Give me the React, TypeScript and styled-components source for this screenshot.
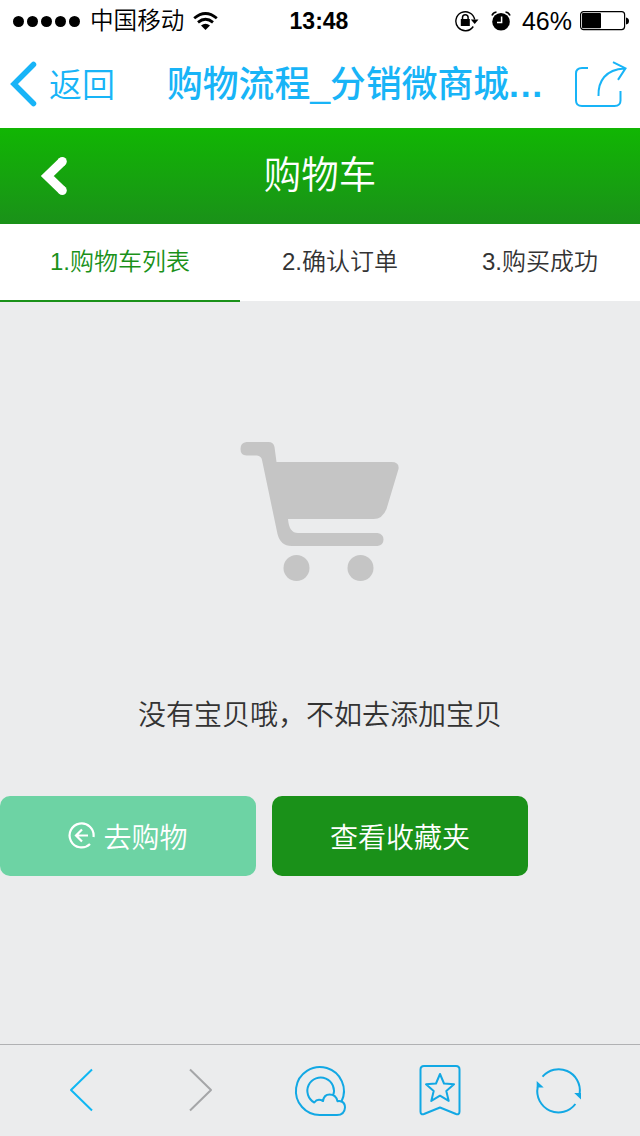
import React from 'react';
import styled, { createGlobalStyle } from 'styled-components';

const GlobalStyle = createGlobalStyle`
  * { box-sizing: border-box; }
  body {
    margin: 0;
    background: #ebeced;
    font-family: "Liberation Sans", "Noto Sans CJK SC", sans-serif;
  }
  svg { display: block; flex: none; }
`;

const BLUE = '#18b4f7';
const TOOL_BLUE = '#12a8e4';
const GREEN = '#1a9119';

const Screen = styled.div`
  display: flex;
  flex-direction: column;
  width: 640px;
  height: 1136px;
  overflow: hidden;
  background: #ebeced;
`;

const StatusBar = styled.header`
  display: grid;
  grid-template-columns: 1fr auto 1fr;
  align-items: center;
  height: 40px;
  padding: 0 11px 0 13px;
  background: #fff;
  color: #000;
`;

const StatusGroup = styled.div<{ $end?: boolean }>`
  display: flex;
  align-items: center;
  justify-content: ${(p) => (p.$end ? 'flex-end' : 'flex-start')};
`;

const SignalDots = styled.div`
  display: flex;
  gap: 3px;
  margin-right: 10px;
`;

const Dot = styled.i`
  width: 11px;
  height: 11px;
  border-radius: 50%;
  background: #000;
`;

const Carrier = styled.span`
  height: 40px;
  margin-right: 9px;
  font-size: 23.6px;
  font-weight: 350;
  line-height: 41px;
`;

const Clock = styled.time`
  margin-right: 4px;
  font-size: 23px;
  font-weight: 700;
  line-height: 42px;
`;

const StatusIcons = styled.div`
  display: flex;
  align-items: center;
  gap: 12px;
`;

const Percent = styled.span`
  margin: 0 8px 0 11px;
  font-size: 25px;
  line-height: 40px;
`;

const NavBar = styled.nav`
  display: flex;
  align-items: center;
  height: 88px;
  padding: 0 12px 0 10px;
  background: #fff;
  color: ${BLUE};
`;

const BackLabel = styled.span`
  width: 118px;
  height: 88px;
  margin-left: 11px;
  font-size: 33px;
  font-weight: 350;
  line-height: 92px;
`;

const NavTitle = styled.h1`
  flex: 1;
  height: 88px;
  margin: 0;
  font-size: 35.8px;
  font-weight: 500;
  line-height: 90px;
  white-space: nowrap;
`;

const Ellipsis = styled.span`
  font-weight: 700;
  letter-spacing: 1.6px;
`;

const PageHeader = styled.div`
  display: grid;
  grid-template-columns: 80px 1fr 80px;
  align-items: center;
  height: 96px;
  background: linear-gradient(#11b603, #1a9119);
  color: #fff;
`;

const BackButton = styled.a`
  padding-left: 39.5px;
`;

const PageTitle = styled.h2`
  height: 96px;
  margin: 0;
  font-size: 37.5px;
  font-weight: 350;
  line-height: 94px;
  text-align: center;
`;

const Steps = styled.ol`
  display: grid;
  grid-template-columns: 240px 200px 200px;
  height: 78px;
  margin: 0;
  padding: 0;
  list-style: none;
  background: linear-gradient(#fff 77px, #ebeced 77px);
`;

const Step = styled.li<{ $active?: boolean }>`
  border-bottom: 2px solid ${(p) => (p.$active ? GREEN : 'transparent')};
  color: ${(p) => (p.$active ? GREEN : '#333')};
  font-size: 24px;
  font-weight: 350;
  line-height: 76px;
  text-align: center;
`;

const EmptyCart = styled.main`
  display: flex;
  flex: 1;
  flex-direction: column;
  align-items: center;
  padding-top: 138px;
`;

const Message = styled.p`
  margin: 111px 0 57px;
  color: #333;
  font-size: 28px;
  font-weight: 350;
  line-height: 46px;
`;

const Actions = styled.div`
  display: flex;
  gap: 16px;
  width: 100%;
`;

const ActionButton = styled.button<{ $bg: string }>`
  display: flex;
  align-items: center;
  justify-content: center;
  gap: 8px;
  width: 256px;
  height: 80px;
  padding: 0 0 1px;
  border: 0;
  border-radius: 10px;
  background: ${(p) => p.$bg};
  color: #fff;
  font-family: inherit;
  font-size: 28px;
  font-weight: 350;
`;

const Toolbar = styled.footer`
  display: grid;
  grid-template-columns: repeat(5, 119.5px);
  justify-content: center;
  align-items: center;
  justify-items: center;
  height: 92px;
  padding: 0 0 1px;
  border-top: 1px solid #b0b1b3;
`;

const WifiIcon = () => (
  <svg width="25" height="19" viewBox="0 0 25 19" fill="none" stroke="#000" strokeWidth="2.8">
    <path d="M1.2 6.3Q12.5-3.3 23.8 6.3M5 10.4q7.500-6.200 15 0" />
    <path d="M8 13.600q4.500-3.700 9 0L12.500 18z" fill="#000" stroke="none" />
  </svg>
);

const LockIcon = () => (
  <svg width="24" height="22" viewBox="0 0 24 22" fill="none" stroke="#000">
    <path d="M18.300 16.500A9.500 9.500 0 1 1 19.700 9.500" strokeWidth="1.400" />
    <path d="M15.800 9.500h7.700l-3.800 4.500z" fill="#000" stroke="none" />
    <rect x="5.800" y="9" width="9" height="7" fill="#000" stroke="none" />
    <path d="M7.500 10V7.500a2.800 2.800 0 0 1 5.600 0V10" strokeWidth="1.500" />
  </svg>
);

const AlarmIcon = () => (
  <svg width="20" height="20" viewBox="0 0 20 20" fill="none">
    <circle cx="10" cy="10.800" r="8.800" fill="#000" />
    <path d="M1 4.600Q2 1.500 5.500 1M19 4.600Q18 1.500 14.500 1" stroke="#000" strokeWidth="1.700" />
    <path d="M10.600 5.500v6H6" stroke="#fff" strokeWidth="1.500" />
  </svg>
);

const BatteryIcon = () => (
  <svg width="49" height="20" viewBox="0 0 49 20">
    <rect x=".6" y=".6" width="44" height="18" rx="3" fill="none" stroke="#000" strokeWidth="1.200" />
    <rect x="2" y="2" width="19" height="15.300" rx="1" />
    <path d="M46 6.500q3 .5 3 3.500t-3 3.500z" />
  </svg>
);

const NavBackIcon = () => (
  <svg width="28" height="46" viewBox="0 0 28 46" fill="none" stroke={BLUE} strokeWidth="5.500" strokeLinecap="round">
    <path d="M23.500 3.500L4 23l19.500 19.500" />
  </svg>
);

const ShareIcon = () => (
  <svg width="54" height="48" viewBox="0 0 54 48" fill="none" stroke={BLUE} strokeWidth="2">
    <path d="M14 8H8Q2 8 2 13.500v27Q2 46 8 46H40.500q6 0 6-5.500V31" />
    <path d="M24.500 36C24 21 31.500 9.500 50.500 8.500M39 2.200l12.500 6.200-7.500 11.500" />
  </svg>
);

const HeaderBackIcon = () => (
  <svg width="28" height="40" viewBox="0 0 28 40" fill="none" stroke="#fff" strokeWidth="9">
    <path d="M22.300 5.500L7.300 20l15 14.500" />
    <circle cx="22.300" cy="5.500" r="4.500" fill="#fff" stroke="none" />
    <circle cx="22.300" cy="34.500" r="4.500" fill="#fff" stroke="none" />
  </svg>
);

const CartIcon = () => (
  <svg width="160" height="142" viewBox="0.5 0 160 142" fill="#c5c5c5">
    <path d="M7 2h22q5 0 6 5l2 15h115q8 0 7 7l-12 40q-4 10-13 10H48.500q1 14 10 14H138q6 1 6 6.500t-6 6.500H52q-11 0-14-12L22.500 20q-.7-4-5-4.500H7Q1 15.500 1 9t6-7z" />
    <circle cx="57" cy="128" r="13" />
    <circle cx="121" cy="128" r="13" />
  </svg>
);

const ReturnIcon = () => (
  <svg width="27" height="27" viewBox="0 0 27 27" fill="none" stroke="#fff" strokeWidth="2.200">
    <path d="M25.500 15A12 12 0 1 0 22 22" />
    <path d="M20 13.500H8M14 7.500l-6 6 6 6" />
  </svg>
);

const ToolIcon = ({ children, color = TOOL_BLUE }: { children: React.ReactNode; color?: string }) => (
  <svg width="56" height="56" viewBox="0 0 56 56" fill="none" stroke={color} strokeWidth="2" strokeLinejoin="round">
    {children}
  </svg>
);

export default function App() {
  return (
    <>
      <GlobalStyle />
      <Screen>
        <StatusBar>
          <StatusGroup>
            <SignalDots>
              {[0, 1, 2, 3, 4].map((n) => (
                <Dot key={n} />
              ))}
            </SignalDots>
            <Carrier>中国移动</Carrier>
            <WifiIcon />
          </StatusGroup>
          <Clock>13:48</Clock>
          <StatusGroup $end>
            <StatusIcons>
              <LockIcon />
              <AlarmIcon />
            </StatusIcons>
            <Percent>46%</Percent>
            <BatteryIcon />
          </StatusGroup>
        </StatusBar>

        <NavBar>
          <NavBackIcon />
          <BackLabel>返回</BackLabel>
          <NavTitle>
            购物流程_分销微商城<Ellipsis>...</Ellipsis>
          </NavTitle>
          <ShareIcon />
        </NavBar>

        <PageHeader>
          <BackButton>
            <HeaderBackIcon />
          </BackButton>
          <PageTitle>购物车</PageTitle>
        </PageHeader>

        <Steps>
          <Step $active>1.购物车列表</Step>
          <Step>2.确认订单</Step>
          <Step>3.购买成功</Step>
        </Steps>

        <EmptyCart>
          <CartIcon />
          <Message>没有宝贝哦，不如去添加宝贝</Message>
          <Actions>
            <ActionButton $bg="#6dd3a4">
              <ReturnIcon />
              去购物
            </ActionButton>
            <ActionButton $bg={GREEN}>查看收藏夹</ActionButton>
          </Actions>
        </EmptyCart>

        <Toolbar>
          <ToolIcon color="#10b7f3">
            <path d="M39 7.500L18 28 39 48.500" />
          </ToolIcon>
          <ToolIcon color="#a5a6a8">
            <path d="M17 7.500L38 28 17 48.500" />
          </ToolIcon>
          <ToolIcon>
            <path d="M28.500 53A24 24 0 1 1 49.500 39.500Q53 41 53 45.500 52.500 53 45 53z" />
            <path d="M49.500 39.500Q47.500 38.500 45.500 39.200 44 32.500 37.500 32.500 32 32.500 31 39 25.500 36 22.300 40.500A13.300 13.300 0 1 1 41.100 33.500" />
          </ToolIcon>
          <ToolIcon>
            <path d="M12 4h32q3.500 0 3.500 3.500v42q0 3.500-3.500 2.500L28 45.500 12 52q-3.500 1-3.500-2.500v-42Q8.500 4 12 4z" />
            <path d="M28 12l4 9.500 10 .8-7.700 6.600 2.400 10L28 33.700l-8.700 5.200 2.400-10L14 22.300l10-.8z" />
          </ToolIcon>
          <ToolIcon>
            <path d="M11.500 14.700A21.200 21.200 0 0 1 48.700 31M44.400 42A21.200 21.200 0 0 1 6.700 25" />
            <path d="M43.200 31h6.800v6.500zM12.700 25.500H5.700V19z" fill={TOOL_BLUE} stroke="none" />
          </ToolIcon>
        </Toolbar>
      </Screen>
    </>
  );
}
